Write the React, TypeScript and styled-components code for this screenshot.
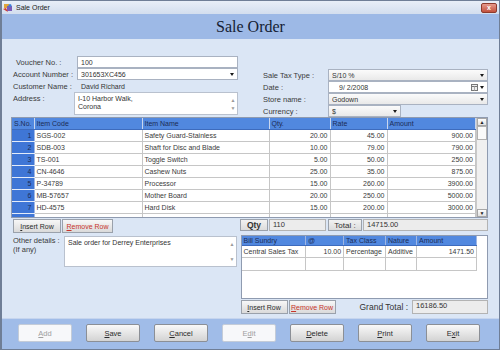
import React from "react";
import styled, { createGlobalStyle } from "styled-components";

const GlobalStyle = createGlobalStyle`
  html, body {
    margin: 0;
    padding: 0;
  }
  body {
    width: 500px;
    height: 350px;
    overflow: hidden;
    font-family: "Liberation Sans", Arial, sans-serif;
    font-size: 7.5px;
    color: #2b2b2b;
  }
`;

const Window = styled.div`
  width: 500px;
  height: 350px;
  box-sizing: border-box;
  display: flex;
  flex-direction: column;
  background: #dbe6f5;
  border: 1px solid #6f7e96;
  border-left-width: 2px;
  overflow: hidden;
`;

const TitleBar = styled.div`
  height: 13px;
  flex: none;
  display: flex;
  align-items: center;
  gap: 3px;
  padding: 0 2px 0 1px;
  background: linear-gradient(#e8eef7, #d3deee);
  font-size: 7px;
  color: #1c1c1c;
`;

const TitleText = styled.span`
  flex: 1;
`;

const CloseBox = styled.div`
  width: 14px;
  height: 8px;
  border-radius: 2px;
  background: linear-gradient(#e79a8c, #c2513d);
  border: 1px solid #8e3a2c;
  color: #fff;
  font-size: 7px;
  line-height: 8px;
  text-align: center;
  font-weight: bold;
`;

const Banner = styled.div`
  height: 25px;
  flex: none;
  display: flex;
  align-items: center;
  justify-content: center;
  background: #9db9e6;
  font-family: "Liberation Serif", "Times New Roman", serif;
  font-size: 16px;
  color: #151d33;
`;

const Body = styled.div`
  flex: 1;
  min-height: 0;
  display: flex;
  flex-direction: column;
  padding: 0 11px 0 8px;
`;

const TopForm = styled.div`
  display: grid;
  grid-template-columns: 228px 1fr;
  column-gap: 25px;
  padding-top: 17px;
  height: 59px;
`;

const FormCol = styled.div<{ $top?: number; $label: number; $inset?: number }>`
  display: grid;
  grid-template-columns: ${(p) => p.$label}px 1fr;
  grid-auto-rows: 12px;
  align-items: center;
  padding-top: ${(p) => p.$top ?? 0}px;
  padding-left: ${(p) => p.$inset ?? 0}px;
`;

const Label = styled.div<{ $indent?: number; $top?: boolean }>`
  font-size: 7.5px;
  color: #3a3a3a;
  padding-left: ${(p) => p.$indent ?? 0}px;
  align-self: ${(p) => (p.$top ? "start" : "center")};
  padding-top: ${(p) => (p.$top ? 2 : 0)}px;
  white-space: nowrap;
`;

const Field = styled.div<{ $w?: number; $bg?: string; $pad?: number }>`
  box-sizing: border-box;
  height: 12px;
  width: ${(p) => (p.$w ? `${p.$w}px` : "100%")};
  background: ${(p) => p.$bg ?? "#fff"};
  border: 1px solid #a9b2c1;
  display: flex;
  align-items: center;
  padding: 0 3px 0 ${(p) => p.$pad ?? 3}px;
  font-size: 7px;
  color: #333;
  gap: 2px;
`;

const FieldText = styled.span`
  flex: 1;
  white-space: nowrap;
  overflow: hidden;
`;

const Arrow = styled.span`
  width: 0;
  height: 0;
  border-left: 2.5px solid transparent;
  border-right: 2.5px solid transparent;
  border-top: 3px solid #1a1a1a;
`;

const PlainValue = styled.div`
  font-size: 7px;
  color: #333;
  padding-left: 4px;
`;

const TextArea = styled.div<{ $w?: number; $h: number }>`
  box-sizing: border-box;
  width: ${(p) => (p.$w ? `${p.$w}px` : "100%")};
  height: ${(p) => p.$h}px;
  background: #fff;
  border: 1px solid #b9c1ce;
  display: flex;
  font-size: 7px;
  color: #333;
  line-height: 8px;
`;

const AreaText = styled.div`
  flex: 1;
  padding: 2px 3px;
`;

const MiniScroll = styled.div`
  width: 8px;
  display: flex;
  flex-direction: column;
  justify-content: space-between;
  align-items: center;
  color: #9a9a9a;
  font-size: 5px;
  padding: 3px 0;
`;

const AddressCell = styled.div`
  grid-row: span 2;
  align-self: start;
  margin-left: -3px;
`;

const GridBox = styled.div`
  margin-top: 2px;
  margin-left: 1px;
  height: 101px;
  box-sizing: border-box;
  border: 1px solid #8f9bb0;
  background: #fff;
  display: flex;
  overflow: hidden;
`;

const TableWrap = styled.div`
  flex: 1;
  overflow: hidden;
`;

const Table = styled.table`
  width: 100%;
  border-collapse: collapse;
  table-layout: fixed;
  font-size: 7px;
  color: #3a3a3a;
`;

const Th = styled.th`
  height: 11px;
  padding: 0 2px;
  background: #5188df;
  color: #1c2c55;
  font-weight: normal;
  text-align: left;
  border-right: 1px solid #c9d6ee;
  border-bottom: 1px solid #3d6bbd;
  white-space: nowrap;
  overflow: hidden;
`;

const Td = styled.td<{ $right?: boolean; $h?: number }>`
  height: ${(p) => p.$h ?? 11}px;
  padding: 0 2px;
  text-align: ${(p) => (p.$right ? "right" : "left")};
  border-right: 1px solid #c6c6c6;
  border-bottom: 1px solid #c6c6c6;
  white-space: nowrap;
  overflow: hidden;
`;

const NumTd = styled(Td)`
  background: #3f76d6;
  color: #1c2c55;
  text-align: right;
  border-right: 1px solid #9fb6e2;
  border-bottom: 1px solid #e4ecfa;
`;

const ScrollBar = styled.div`
  width: 10px;
  background: #f0f0f0;
  border-left: 1px solid #c9c9c9;
  display: flex;
  flex-direction: column;
`;

const ScrollBtn = styled.div`
  height: 8px;
  box-sizing: border-box;
  border: 1px solid #a7a7a7;
  background: linear-gradient(#fdfdfd, #e2e2e2);
  display: flex;
  align-items: center;
  justify-content: center;
  font-size: 5px;
  color: #222;
`;

const Thumb = styled.div`
  height: 14px;
  box-sizing: border-box;
  border: 1px solid #b0b0b0;
  background: #fafafa;
`;

const Spacer = styled.div`
  flex: 1;
`;

const MidRow = styled.div`
  display: flex;
  align-items: flex-start;
  margin-top: 1px;
  height: 15px;
`;

const SmallBtn = styled.div<{ $danger?: boolean; $w: number; $lead?: number }>`
  box-sizing: border-box;
  width: ${(p) => p.$w}px;
  height: 14px;
  margin-left: ${(p) => p.$lead ?? 0}px;
  margin-right: 1px;
  border: 1px solid #9aa1ab;
  background: linear-gradient(#f7f7f7, #dadada);
  display: flex;
  align-items: center;
  justify-content: center;
  font-size: 7px;
  color: ${(p) => (p.$danger ? "#c8342a" : "#2b2b2b")};
`;

const TotalsGroup = styled.div`
  margin-left: auto;
  display: flex;
  width: 248px;
  height: 12px;
`;

const BoxLabel = styled.div<{ $w: number; $bold?: boolean; $gap?: number }>`
  box-sizing: border-box;
  width: ${(p) => p.$w}px;
  height: 12px;
  margin-left: ${(p) => p.$gap ?? 0}px;
  border: 1px solid #9aa1ab;
  background: linear-gradient(#f2f2f2, #dcdcdc);
  display: flex;
  align-items: center;
  justify-content: center;
  font-size: ${(p) => (p.$bold ? 8.5 : 8)}px;
  font-weight: ${(p) => (p.$bold ? "bold" : "normal")};
  color: #333;
`;

const ValueBox = styled.div<{ $w?: number; $h?: number }>`
  box-sizing: border-box;
  width: ${(p) => (p.$w ? `${p.$w}px` : "auto")};
  flex: ${(p) => (p.$w ? "none" : 1)};
  height: ${(p) => p.$h ?? 12}px;
  border: 1px solid #b3b3b3;
  background: #ececec;
  padding: 0 3px;
  font-size: 7.5px;
  color: #333;
  line-height: 10px;
  margin-left: 1px;
`;

const Lower = styled.div`
  display: flex;
  margin-top: 1px;
`;

const OtherDetails = styled.div`
  display: flex;
  padding-left: 3px;
  padding-top: 1px;
  width: 229px;
`;

const OtherLabel = styled.div`
  width: 51px;
  font-size: 7.5px;
  color: #3a3a3a;
  line-height: 9px;
`;

const SundryPanel = styled.div`
  margin-left: auto;
  width: 249px;
  display: flex;
  flex-direction: column;
`;

const SundryBox = styled.div`
  height: 64px;
  box-sizing: border-box;
  border: 1px solid #8f9bb0;
  background: #fff;
  padding-right: 10px;
`;

const SundryTable = styled(Table)`
  border-right: 1px solid #9a9a9a;
  border-bottom: 1px solid #9a9a9a;
`;

const SundryTh = styled(Th)`
  height: 9px;
  border-right: 1px solid #9fb6e2;
`;

const GrandRow = styled.div`
  display: flex;
  align-items: center;
  margin-top: 1px;
`;

const GrandLabel = styled.div`
  flex: 1;
  text-align: right;
  font-size: 8.5px;
  color: #333;
  padding-right: 3px;
`;

const Footer = styled.div`
  height: 31px;
  flex: none;
  box-sizing: border-box;
  margin-top: 3px;
  border-top: 1px solid #c6d5ee;
  background: #a0bce8;
  display: flex;
  align-items: center;
  gap: 14px;
  padding: 0 0 2px 16px;
`;

const ActionBtn = styled.div<{ $disabled?: boolean }>`
  box-sizing: border-box;
  width: 54px;
  height: 18px;
  border-radius: 2px;
  border: 1px solid ${(p) => (p.$disabled ? "#c4ccd8" : "#8b8f96")};
  background: ${(p) =>
    p.$disabled ? "#f7f8fa" : "linear-gradient(#f9f9f9, #e4e4e4 55%, #d3d3d3)"};
  display: flex;
  align-items: center;
  justify-content: center;
  font-size: 7.5px;
  color: ${(p) => (p.$disabled ? "#a0a0a0" : "#2a2a2a")};
`;

const AppIcon = () => (
  <svg width="10" height="10" viewBox="0 0 10 10">
    <rect x="1" y="1" width="5" height="4" fill="#e0a53b" />
    <rect x="4" y="3" width="5" height="5" fill="#7a5bb8" />
    <path d="M0 6 L5 9 L3 5 Z" fill="#d33a2c" />
    <circle cx="7" cy="2.5" r="1.5" fill="#3d7fd6" />
  </svg>
);

const CalIcon = () => (
  <svg width="7" height="7" viewBox="0 0 7 7">
    <rect x="0.5" y="0.5" width="6" height="6" fill="#eee" stroke="#777" />
    <line x1="0.5" y1="2.5" x2="6.5" y2="2.5" stroke="#777" />
    <line x1="3.5" y1="2.5" x2="3.5" y2="6.5" stroke="#aaa" />
  </svg>
);

const items = [
  ["SGS-002", "Safety Guard-Stainless", "20.00", "45.00", "900.00"],
  ["SDB-003", "Shaft for Disc and Blade", "10.00", "79.00", "790.00"],
  ["TS-001", "Toggle Switch", "5.00", "50.00", "250.00"],
  ["CN-4646", "Cashew Nuts", "25.00", "35.00", "875.00"],
  ["P-34789", "Processor", "15.00", "260.00", "3900.00"],
  ["MB-57657", "Mother Board", "20.00", "250.00", "5000.00"],
  ["HD-4575", "Hard Disk", "15.00", "200.00", "3000.00"],
];

const actions: { label: React.ReactNode; disabled?: boolean }[] = [
  { label: <><u>A</u>dd</>, disabled: true },
  { label: <><u>S</u>ave</> },
  { label: <><u>C</u>ancel</> },
  { label: <>E<u>d</u>it</>, disabled: true },
  { label: <><u>D</u>elete</> },
  { label: <><u>P</u>rint</> },
  { label: <>E<u>x</u>it</> },
];

const Select = ({ value, w, bg }: { value: string; w?: number; bg?: string }) => (
  <Field $w={w} $bg={bg ?? "linear-gradient(#fbfbfb, #e9e9e9)"}>
    <FieldText>{value}</FieldText>
    <Arrow />
  </Field>
);

const App = () => {
  return (
    <>
      <GlobalStyle />
      <Window>
        <TitleBar>
          <AppIcon />
          <TitleText>Sale Order</TitleText>
          <CloseBox>x</CloseBox>
        </TitleBar>
        <Banner>Sale Order</Banner>
        <Body>
          <TopForm>
            <FormCol $label={64} $inset={3}>
              <Label $indent={3}>Voucher No. :</Label>
              <Field>
                <FieldText>100</FieldText>
              </Field>
              <Label>Account Number :</Label>
              <Select value="301653XC456" bg="#fff" />
              <Label>Customer Name :</Label>
              <PlainValue>David Richard</PlainValue>
              <Label $top>Address :</Label>
              <AddressCell>
                <TextArea $h={23}>
                  <AreaText>
                    I-10 Harbor Walk,
                    <br />
                    Corona
                  </AreaText>
                  <MiniScroll>
                    <span>▲</span>
                    <span>▼</span>
                  </MiniScroll>
                </TextArea>
              </AddressCell>
            </FormCol>
            <FormCol $label={65} $top={13}>
              <Label>Sale Tax Type :</Label>
              <Select value="S/10 %" />
              <Label>Date :</Label>
              <Field $pad={10}>
                <FieldText>9/ 2/2008</FieldText>
                <CalIcon />
                <Arrow />
              </Field>
              <Label>Store name :</Label>
              <Select value="Godown" />
              <Label>Currency :</Label>
              <Select value="$" w={73} />
            </FormCol>
          </TopForm>

          <GridBox>
            <TableWrap>
              <Table>
                <colgroup>
                  <col style={{ width: 22 }} />
                  <col style={{ width: 108 }} />
                  <col style={{ width: 127 }} />
                  <col style={{ width: 61 }} />
                  <col style={{ width: 57 }} />
                  <col />
                </colgroup>
                <thead>
                  <tr>
                    <Th>S.No.</Th>
                    <Th>Item Code</Th>
                    <Th>Item Name</Th>
                    <Th>Qty.</Th>
                    <Th>Rate</Th>
                    <Th>Amount</Th>
                  </tr>
                </thead>
                <tbody>
                  {items.map((r, i) => (
                    <tr key={r[0]}>
                      <NumTd>{i + 1}</NumTd>
                      <Td>{r[0]}</Td>
                      <Td>{r[1]}</Td>
                      <Td $right>{r[2]}</Td>
                      <Td $right>{r[3]}</Td>
                      <Td $right>{r[4]}</Td>
                    </tr>
                  ))}
                  <tr>
                    <NumTd />
                    <Td />
                    <Td />
                    <Td />
                    <Td />
                    <Td />
                  </tr>
                </tbody>
              </Table>
            </TableWrap>
            <ScrollBar>
              <ScrollBtn>▲</ScrollBtn>
              <Thumb />
              <Spacer />
              <ScrollBtn>▼</ScrollBtn>
            </ScrollBar>
          </GridBox>

          <MidRow>
            <SmallBtn $w={48} $lead={3}>
              <span>
                <u>I</u>nsert Row
              </span>
            </SmallBtn>
            <SmallBtn $w={51} $danger>
              <span>
                <u>R</u>emove Row
              </span>
            </SmallBtn>
            <TotalsGroup>
              <BoxLabel $w={28} $bold>
                Qty
              </BoxLabel>
              <ValueBox $w={57}>110</ValueBox>
              <BoxLabel $w={34} $gap={2}>
                Total :
              </BoxLabel>
              <ValueBox>14715.00</ValueBox>
            </TotalsGroup>
          </MidRow>

          <Lower>
            <OtherDetails>
              <OtherLabel>
                Other details :
                <br />
                (If any)
              </OtherLabel>
              <TextArea $w={173} $h={31}>
                <AreaText>Sale order for Derrey Enterprises</AreaText>
                <MiniScroll>
                  <span>▲</span>
                  <span>▼</span>
                </MiniScroll>
              </TextArea>
            </OtherDetails>
            <SundryPanel>
              <SundryBox>
                <SundryTable>
                  <colgroup>
                    <col style={{ width: 64 }} />
                    <col style={{ width: 38 }} />
                    <col style={{ width: 42 }} />
                    <col style={{ width: 31 }} />
                    <col />
                  </colgroup>
                  <thead>
                    <tr>
                      <SundryTh>Bill Sundry</SundryTh>
                      <SundryTh>@</SundryTh>
                      <SundryTh>Tax Class</SundryTh>
                      <SundryTh>Nature</SundryTh>
                      <SundryTh>Amount</SundryTh>
                    </tr>
                  </thead>
                  <tbody>
                    <tr>
                      <Td>Central Sales Tax</Td>
                      <Td $right>10.00</Td>
                      <Td>Percentage</Td>
                      <Td>Additive</Td>
                      <Td $right>1471.50</Td>
                    </tr>
                    <tr>
                      <Td $h={12} />
                      <Td $h={12} />
                      <Td $h={12} />
                      <Td $h={12} />
                      <Td $h={12} />
                    </tr>
                  </tbody>
                </SundryTable>
              </SundryBox>
              <GrandRow>
                <SmallBtn $w={47}>
                  <span>
                    <u>I</u>nsert Row
                  </span>
                </SmallBtn>
                <SmallBtn $w={47} $danger>
                  <span>
                    <u>R</u>emove Row
                  </span>
                </SmallBtn>
                <GrandLabel>Grand Total :</GrandLabel>
                <ValueBox $w={76} $h={14}>
                  16186.50
                </ValueBox>
              </GrandRow>
            </SundryPanel>
          </Lower>
        </Body>
        <Footer>
          {actions.map((a, i) => (
            <ActionBtn key={i} $disabled={a.disabled}>
              <span>{a.label}</span>
            </ActionBtn>
          ))}
        </Footer>
      </Window>
    </>
  );
};

export default App;
